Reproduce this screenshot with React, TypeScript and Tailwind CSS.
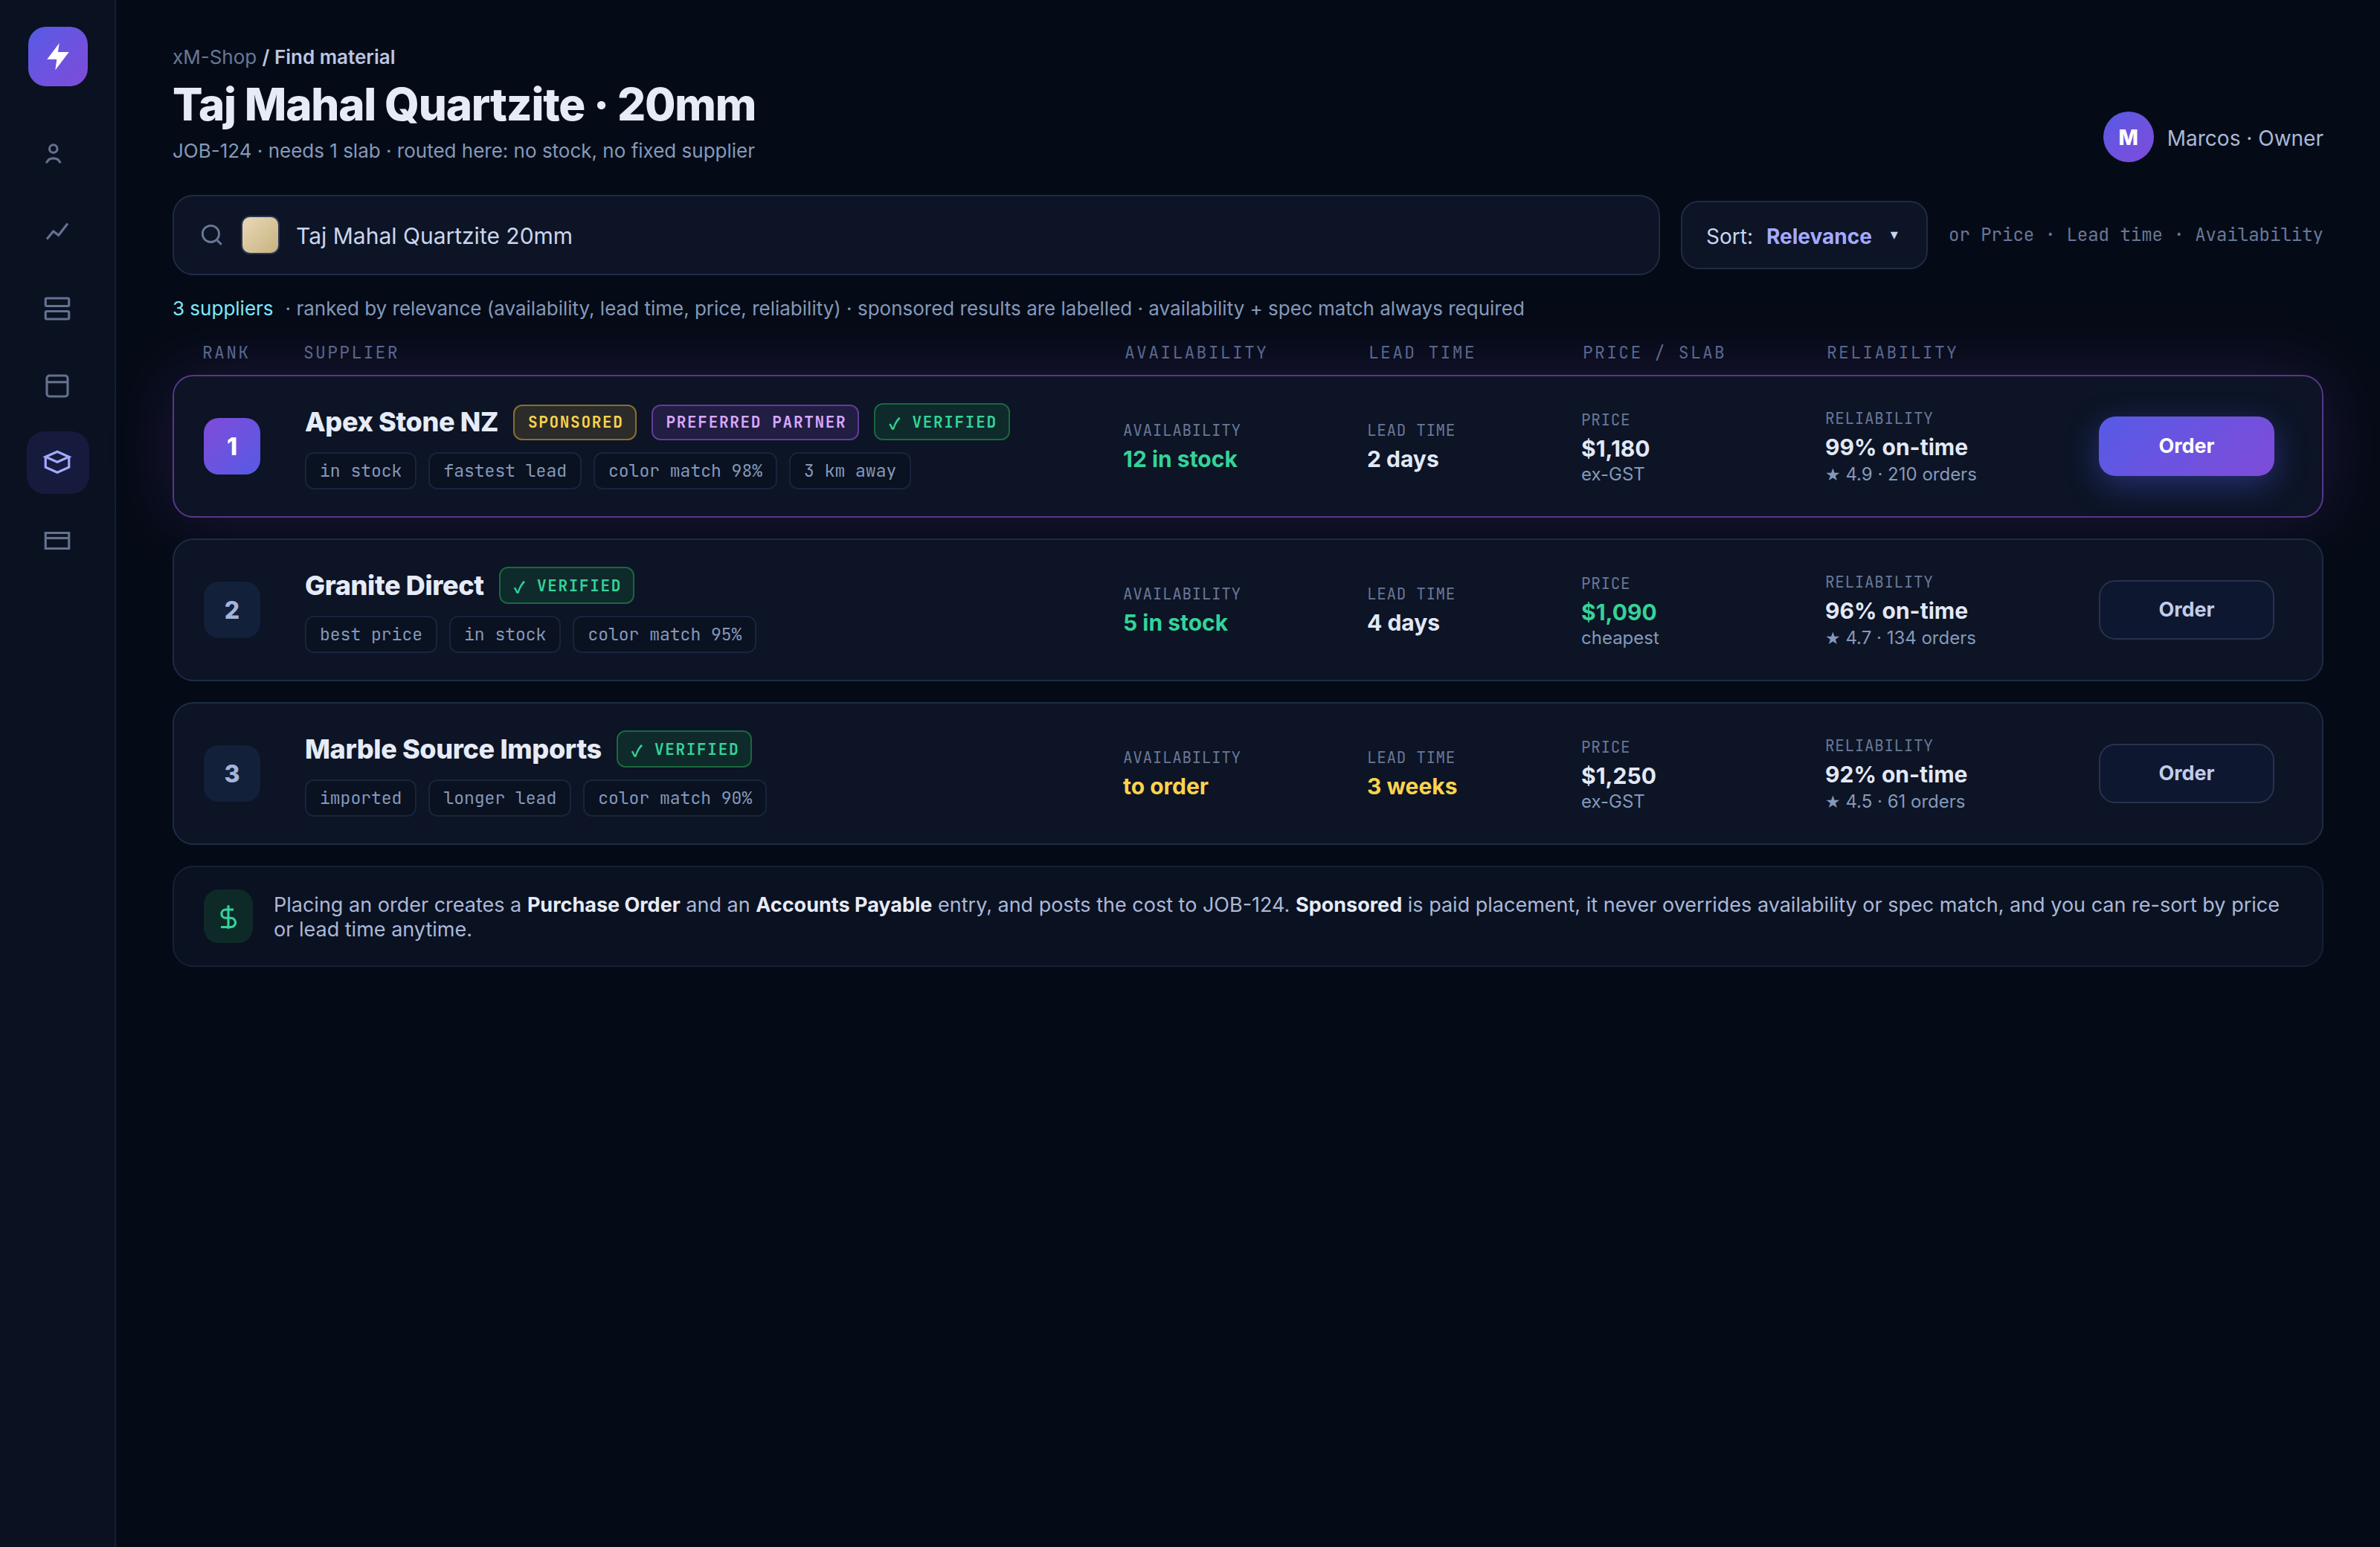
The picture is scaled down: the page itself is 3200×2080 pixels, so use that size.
import React from "react";
import { clsx } from "clsx";

type Tone = "good" | "warn" | "plain";

type Supplier = {
  rank: number;
  name: string;
  sponsored?: boolean;
  preferred?: boolean;
  tags: string[];
  stock: string;
  stockTone: Tone;
  lead: string;
  leadTone: Tone;
  price: string;
  priceTone: Tone;
  priceNote: string;
  onTime: string;
  rating: string;
};

const suppliers: Supplier[] = [
  {
    rank: 1,
    name: "Apex Stone NZ",
    sponsored: true,
    preferred: true,
    tags: ["in stock", "fastest lead", "color match 98%", "3 km away"],
    stock: "12 in stock",
    stockTone: "good",
    lead: "2 days",
    leadTone: "plain",
    price: "$1,180",
    priceTone: "plain",
    priceNote: "ex-GST",
    onTime: "99% on-time",
    rating: "4.9 · 210 orders",
  },
  {
    rank: 2,
    name: "Granite Direct",
    tags: ["best price", "in stock", "color match 95%"],
    stock: "5 in stock",
    stockTone: "good",
    lead: "4 days",
    leadTone: "plain",
    price: "$1,090",
    priceTone: "good",
    priceNote: "cheapest",
    onTime: "96% on-time",
    rating: "4.7 · 134 orders",
  },
  {
    rank: 3,
    name: "Marble Source Imports",
    tags: ["imported", "longer lead", "color match 90%"],
    stock: "to order",
    stockTone: "warn",
    lead: "3 weeks",
    leadTone: "warn",
    price: "$1,250",
    priceTone: "plain",
    priceNote: "ex-GST",
    onTime: "92% on-time",
    rating: "4.5 · 61 orders",
  },
];

const navIcons = [
  { name: "Customers", paths: ["M9 5a3 3 0 1 1 0 6a3 3 0 1 1 0-6z", "M3.6 19a5.8 5.8 0 0 1 10.8 0"] },
  { name: "Reports", paths: ["M4 18l5-6 4 3 7-9"] },
  {
    name: "Inventory",
    paths: [
      "M4 4h16a1 1 0 0 1 1 1v4a1 1 0 0 1-1 1H4a1 1 0 0 1-1-1V5a1 1 0 0 1 1-1z",
      "M4 14h16a1 1 0 0 1 1 1v4a1 1 0 0 1-1 1H4a1 1 0 0 1-1-1v-4a1 1 0 0 1 1-1z",
    ],
  },
  {
    name: "Calendar",
    paths: ["M6 4h12a2 2 0 0 1 2 2v12a2 2 0 0 1-2 2H6a2 2 0 0 1-2-2V6a2 2 0 0 1 2-2z", "M4 9h16"],
  },
  { name: "Shop", paths: ["M3 7l9-4 9 4-9 4-9-4z", "M3 7v8l9 4 9-4V7"], active: true },
  { name: "Payments", paths: ["M3 6h18v12H3z", "M3 10h18"] },
];

const gridCols = "grid grid-cols-[108px_1fr_300px_260px_300px_300px_300px] gap-x-7";

const mono = "font-[JetBrains_Mono,DejaVu_Sans_Mono,monospace]";

const toneClass: Record<Tone, string> = {
  good: "text-[#34d399]",
  warn: "text-[#fcd34d]",
  plain: "text-[#e2e8f6]",
};

function Sidebar() {
  return (
    <aside className="flex w-[156px] shrink-0 flex-col items-center border-r-2 border-[#152038] bg-[#0a1120] pl-0.5 pt-9">
      <div className="flex size-20 items-center justify-center rounded-[24px] bg-linear-135 from-[#555ae6] to-[#7e4bd9]">
        <svg className="size-20" viewBox="0 0 80 80" fill="#fff">
          <path d="M41.7 22L25.3 43.7h13l-2 14.6L54.7 34H40z" />
        </svg>
      </div>
      <nav className="mt-12 flex flex-col gap-5">
        {navIcons.map((item) => (
          <a
            key={item.name}
            aria-label={item.name}
            className={clsx(
              "flex size-[84px] rounded-[24px] pl-5 pt-[22px]",
              item.active ? "bg-[#161b3e] text-[#a5a9ff]" : "text-[#64718f]"
            )}
          >
            <svg
              className="size-[42px]"
              viewBox="0 0 24 24"
              fill="none"
              stroke="currentColor"
              strokeWidth="1.8"
            >
              {item.paths.map((d) => (
                <path key={d} d={d} />
              ))}
            </svg>
          </a>
        ))}
      </nav>
    </aside>
  );
}

function Header() {
  return (
    <header className="flex items-end justify-between">
      <div>
        <div className="pt-px text-[26px] leading-8 text-[#6a7797]">
          xM-Shop <span className="font-semibold text-[#bbc6e4]">/ Find material</span>
        </div>
        <h1 className="mt-[11px] text-[60px] font-extrabold leading-[72px] tracking-[-0.02em] text-[#e6ebf7]">
          Taj Mahal Quartzite · 20mm
        </h1>
        <div className="mt-[11px] text-[26px] leading-[31px] text-[#8499bb]">
          JOB-124 · needs 1 slab · routed here: no stock, no fixed supplier
        </div>
      </div>
      <div className="flex items-center gap-[18px]">
        <div className="flex size-[68px] items-center justify-center rounded-full bg-linear-135 from-[#555ae6] to-[#7e4bd9] pt-0.5 text-[28px] font-extrabold text-white">
          M
        </div>
        <span className="pt-1 text-[28px] leading-8 text-[#aab8d8]">Marcos · Owner</span>
      </div>
    </header>
  );
}

function SearchBar() {
  return (
    <div className="mt-11 flex items-center gap-7">
      <div className="flex h-[108px] flex-1 items-center gap-5 rounded-[28px] border-2 border-[#1e2b46] bg-[#0c1425] px-8">
        <svg
          className="size-[38px] text-[#6a7797]"
          viewBox="0 0 24 24"
          fill="none"
          stroke="currentColor"
          strokeWidth="1.8"
        >
          <circle cx="11" cy="11" r="7" />
          <path d="M20 20l-3.5-3.5" />
        </svg>
        <span className="size-[52px] rounded-xl border-2 border-[#2a3754] bg-linear-135 from-[#e8d9b8] to-[#c9b27f]" />
        <span className="ml-0.5 pt-0.5 text-[30px] text-[#cbd5ee]">Taj Mahal Quartzite 20mm</span>
      </div>
      <div className="flex h-[92px] w-[332px] items-center gap-[18px] rounded-[24px] border-2 border-[#1e2b46] bg-[#0c1425] pl-8 text-[28px] text-[#cbd5ee]">
        <span className="pt-1 leading-8">Sort:</span>
        <b className="pt-1 font-bold leading-8 text-[#a5a9ff]">Relevance</b>
        <span className="w-6 pb-0.5 text-center font-[DejaVu_Sans] text-[20px]">▾</span>
      </div>
      <span className={clsx(mono, "text-[24px] text-[#6a7797]")}>or Price · Lead time · Availability</span>
    </div>
  );
}

function Badge({ className, children }: { className: string; children: React.ReactNode }) {
  return (
    <span
      className={clsx(
        mono,
        "rounded-xl border-2 pl-[18px] pr-[15px] text-[21px] font-bold leading-[44px] tracking-[0.08em]",
        className
      )}
    >
      {children}
    </span>
  );
}

type CellProps = {
  label: string;
  value: string;
  tone?: Tone;
  note?: React.ReactNode;
};

function Cell({ label, value, tone = "plain", note }: CellProps) {
  return (
    <div className={clsx(note && "pt-0.5")}>
      <div className={clsx(mono, "text-[21px] uppercase leading-7 tracking-[0.03em] text-[#6a7797]")}>
        {label}
      </div>
      <div className={clsx("mt-1.5 text-[30px] font-bold leading-9", toneClass[tone])}>{value}</div>
      {note}
    </div>
  );
}

function SupplierCard({ s }: { s: Supplier }) {
  const top = s.rank === 1;
  return (
    <article
      className={clsx(
        gridCols,
        "h-48 items-center rounded-[28px] border-2 bg-[#0c1425] px-10",
        top
          ? "border-[#5a358c] shadow-[0_0_92px_rgba(168,85,247,0.16)]"
          : "relative border-[#1e2b46]"
      )}
    >
      <div
        className={clsx(
          "flex size-[76px] items-center justify-center rounded-[20px] pt-0.5 text-[32px] font-extrabold",
          top
            ? "bg-linear-135 from-[#7e4bd9] to-[#555ae6] text-white"
            : "bg-[#12203a] text-[#a3b4dc]"
        )}
      >
        {s.rank}
      </div>

      <div>
        <div className="flex h-[50px] items-end gap-5">
          <span className="text-[36px] font-extrabold leading-[50px] tracking-[-0.01em] text-[#e6ebf7]">
            {s.name}
          </span>
          {s.sponsored && (
            <Badge className="border-[#8a6f2d] bg-[#2b2b2a] text-[#fcd34d]">SPONSORED</Badge>
          )}
          {s.preferred && (
            <Badge className="border-[#5f3d97] bg-[#221d42] text-[#d8a8ff]">PREFERRED PARTNER</Badge>
          )}
          <Badge className="flex h-[50px] items-end border-[#19683f] bg-[#0f2a2b] text-[#34d399]">
            <span className="font-[Noto_Sans_CJK_SC]">✓</span>
            <span className="whitespace-pre"> VERIFIED</span>
          </Badge>
        </div>
        <div className="mt-4 flex gap-4">
          {s.tags.map((tag) => (
            <span
              key={tag}
              className={clsx(
                mono,
                "h-[50px] rounded-xl border-2 border-[#18243d] bg-[#0a1120] px-[18px] text-[23px] leading-[47px] text-[#8499bb]"
              )}
            >
              {tag}
            </span>
          ))}
        </div>
      </div>

      <Cell label="Availability" value={s.stock} tone={s.stockTone} />
      <Cell label="Lead time" value={s.lead} tone={s.leadTone} />
      <Cell
        label="Price"
        value={s.price}
        tone={s.priceTone}
        note={<div className="mt-0.5 text-[24px] leading-[29px] text-[#8499bb]">{s.priceNote}</div>}
      />
      <Cell
        label="Reliability"
        value={s.onTime}
        note={
          <div className="mt-[3px] text-[24px] leading-8 text-[#8499bb]">
            <span className="font-[DejaVu_Sans] text-[23px] leading-none">★</span> {s.rating}
          </div>
        }
      />

      <button
        className={clsx(
          "ml-10 h-20 w-[236px] rounded-[22px] pt-px text-[27px] font-bold",
          top
            ? "bg-linear-135 from-[#555ae6] to-[#7e4bd9] text-white shadow-[0_12px_44px_rgba(79,91,232,0.4)]"
            : "border-2 border-[#27324c] bg-[#0d1730] text-[#c3cce8]"
        )}
      >
        Order
      </button>
    </article>
  );
}

function OrderNote() {
  return (
    <div className="flex h-[136px] items-center gap-7 rounded-[28px] border-2 border-[#152038] bg-[#0a1120] px-10">
      <div className="flex h-[72px] w-[66px] shrink-0 items-center justify-center rounded-[20px] bg-[#0e2a28] text-[#34d399]">
        <svg
          className="mt-0.5 size-[42px]"
          viewBox="0 0 24 24"
          fill="none"
          stroke="currentColor"
          strokeWidth="1.8"
        >
          <path d="M12 3v18M16 6.3h-6a3.2 3.2 0 0 0 0 6.4h4a3.5 3.5 0 0 1 0 7H6.3" />
        </svg>
      </div>
      <p className="pt-0.5 text-[27px] leading-[33px] text-[#aab8d8]">
        Placing an order creates a <b className="font-bold text-[#e6ebf7]">Purchase Order</b> and an{" "}
        <b className="font-bold text-[#e6ebf7]">Accounts Payable</b> entry, and posts the cost to JOB-124.{" "}
        <b className="font-bold text-[#e6ebf7]">Sponsored</b> is paid placement, it never overrides
        availability or spec match, and you can re-sort by price or lead time anytime.
      </p>
    </div>
  );
}

export default function App() {
  return (
    <div className="flex h-[2080px] w-[3200px] overflow-hidden bg-[#050b16] font-[Inter,sans-serif]">
      <Sidebar />
      <main className="flex-1 px-[76px] pt-[60px]">
        <Header />
        <SearchBar />
        <div className="mt-[29px] flex gap-4 text-[26px] leading-8 text-[#8499bb]">
          <span className="text-[#7de8fb]">3 suppliers</span>
          <span>
            · ranked by relevance (availability, lead time, price, reliability) · sponsored results are
            labelled · availability + spec match always required
          </span>
        </div>
        <div
          className={clsx(
            gridCols,
            mono,
            "relative z-10 mt-[27px] px-10 text-[23px] leading-8 tracking-[0.1em] text-[#5a668c]"
          )}
        >
          <span>RANK</span>
          <span>SUPPLIER</span>
          <span>AVAILABILITY</span>
          <span>LEAD TIME</span>
          <span>PRICE / SLAB</span>
          <span>RELIABILITY</span>
        </div>
        <div className="mt-3.5 flex flex-col gap-7">
          {suppliers.map((s) => (
            <SupplierCard key={s.rank} s={s} />
          ))}
          <OrderNote />
        </div>
      </main>
    </div>
  );
}
